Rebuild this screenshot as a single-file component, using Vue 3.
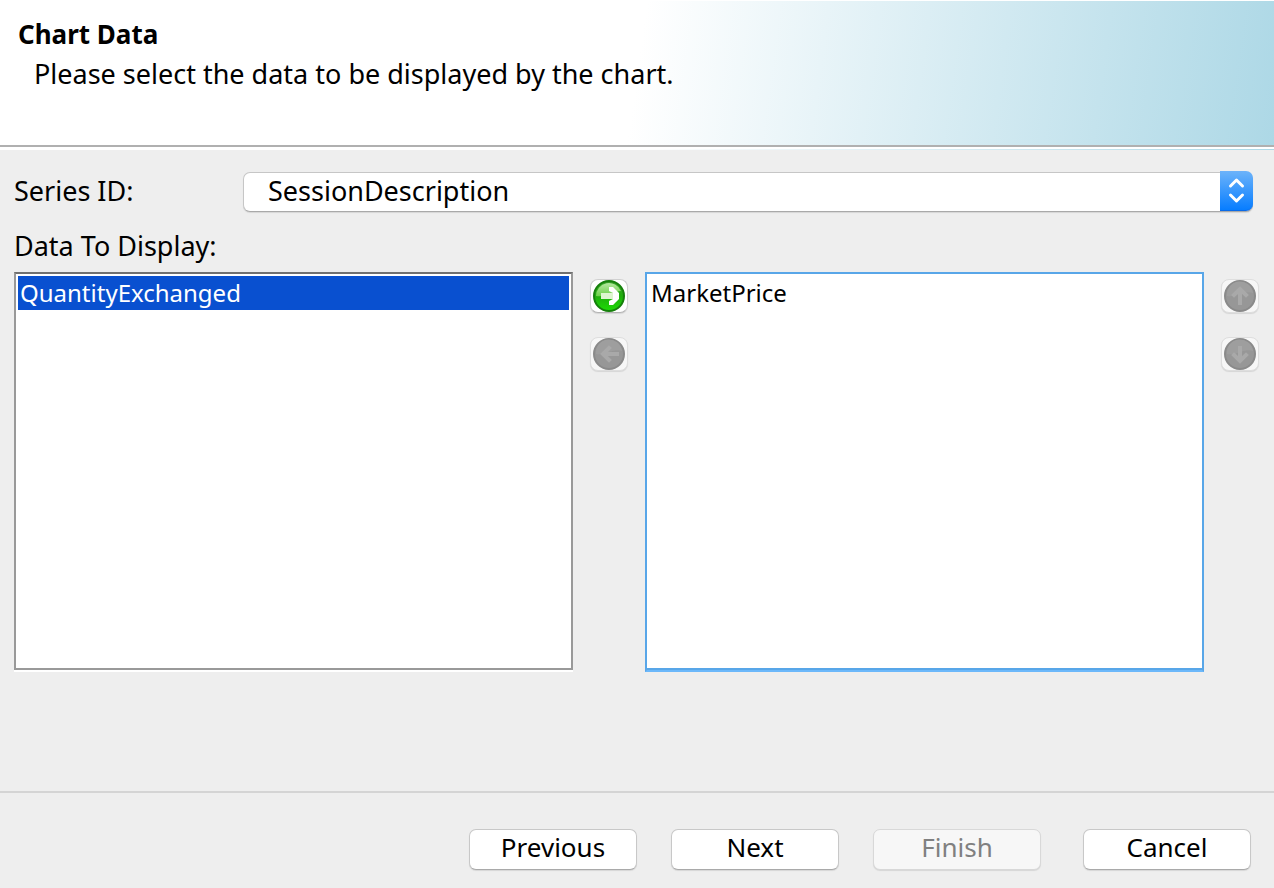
<script setup>
import { ref } from 'vue'

const series = ref('SessionDescription')
const available = ref(['QuantityExchanged'])
const displayed = ref(['MarketPrice'])
const pickedAvailable = ref(['QuantityExchanged'])
const pickedDisplayed = ref([])

function addPicked() {
  displayed.value.push(...pickedAvailable.value)
  available.value = available.value.filter((n) => !pickedAvailable.value.includes(n))
  pickedAvailable.value = []
}
</script>

<template>
  <div class="wizard">
    <header class="banner">
      <h1>Chart Data</h1>
      <p>Please select the data to be displayed by the chart.</p>
    </header>
    <div class="rule"></div>

    <main class="content">
      <div class="series-row">
        <label for="series">Series ID:</label>
        <div class="combo">
          <select id="series" v-model="series">
            <option>SessionDescription</option>
          </select>
          <span class="stepper" aria-hidden="true">
            <svg width="33" height="39" viewBox="0 0 33 39">
              <path d="M10.5 15 L16.5 9 L22.5 15 M10.5 24 L16.5 30 L22.5 24" fill="none" stroke="#fff" stroke-width="3" stroke-linecap="round" stroke-linejoin="round" />
            </svg>
          </span>
        </div>
      </div>

      <label class="lists-label" for="available">Data To Display:</label>
      <div class="lists">
        <select id="available" v-model="pickedAvailable" class="list available" multiple>
          <option v-for="name in available" :key="name">{{ name }}</option>
        </select>
        <div class="tools">
          <button class="tool" type="button" aria-label="Add" @click="addPicked">
            <svg width="34" height="32" viewBox="0 0 34 32">
              <defs>
                <linearGradient id="green" x1="0" y1="0" x2="0" y2="1">
                  <stop offset="0" stop-color="#3aa02a" />
                  <stop offset="0.5" stop-color="#1fae0c" />
                  <stop offset="1" stop-color="#1ddc06" />
                </linearGradient>
                <linearGradient id="gloss" x1="0" y1="0" x2="0" y2="1">
                  <stop offset="0" stop-color="#b4e8a0" />
                  <stop offset="1" stop-color="#6cd048" />
                </linearGradient>
              </defs>
              <circle cx="17" cy="16" r="15" fill="url(#green)" stroke="#16800c" stroke-width="2" />
              <path d="M4 16 A13 13 0 0 1 29 11 Q23 11 17 14 Q10 17 4 16 Z" fill="url(#gloss)" />
              <path d="M9 13 H22 V19 H9 Z" fill="#def5d0" />
              <path d="M17 7 H21 L24 10 L27 13 V19 L24 22 L21 25 H17 V21 L21 19 V13 L17 11 Z" fill="#fff" />
            </svg>
          </button>
          <button class="tool" type="button" aria-label="Remove" disabled>
            <svg width="34" height="32" viewBox="0 0 34 32">
              <circle cx="17" cy="16" r="15" fill="#979797" stroke="#8a8a8a" stroke-width="2" />
              <path d="M4 16 A13 13 0 0 1 30 13 Q24 11 17 14 Q10 17 4 16 Z" fill="#9e9e9e" />
              <path d="M25 16 H12 M17 10 L11 16 L17 22" fill="none" stroke="#a9a9a9" stroke-width="4" stroke-linecap="square" />
            </svg>
          </button>
        </div>
        <select v-model="pickedDisplayed" class="list displayed" multiple aria-label="Displayed data">
          <option v-for="name in displayed" :key="name">{{ name }}</option>
        </select>
        <div class="tools">
          <button class="tool" type="button" aria-label="Move up" disabled>
            <svg width="34" height="32" viewBox="0 0 34 32">
              <circle cx="17" cy="16" r="15" fill="#979797" stroke="#8a8a8a" stroke-width="2" />
              <path d="M4 16 A13 13 0 0 1 30 13 Q24 11 17 14 Q10 17 4 16 Z" fill="#9e9e9e" />
              <path d="M17 23 V10 M11 15 L17 9 L23 15" fill="none" stroke="#a9a9a9" stroke-width="4" stroke-linecap="square" />
            </svg>
          </button>
          <button class="tool" type="button" aria-label="Move down" disabled>
            <svg width="34" height="32" viewBox="0 0 34 32">
              <circle cx="17" cy="16" r="15" fill="#979797" stroke="#8a8a8a" stroke-width="2" />
              <path d="M4 16 A13 13 0 0 1 30 13 Q24 11 17 14 Q10 17 4 16 Z" fill="#9e9e9e" />
              <path d="M17 10 V22 M11 17 L17 23 L23 17" fill="none" stroke="#a9a9a9" stroke-width="4" stroke-linecap="square" />
            </svg>
          </button>
        </div>
      </div>
    </main>

    <footer class="actions">
      <button type="button">Previous</button>
      <button type="button">Next</button>
      <button type="button" disabled>Finish</button>
      <button class="cancel" type="button">Cancel</button>
    </footer>
  </div>
</template>

<style>
body {
  margin: 0;
  background: #eee;
}
</style>

<style scoped>
.wizard {
  display: flex;
  flex-direction: column;
  min-height: 100vh;
  box-sizing: border-box;
  background: #eee;
  color: #000;
  font-family: "Noto Sans", "Lucida Grande", sans-serif;
  font-size: 27px;
  line-height: 40px;
}
.banner {
  min-height: 145px;
  box-sizing: border-box;
  padding: 13px 18px;
  border-top: 1px solid #fff;
  background: linear-gradient(98deg, #fff 50%, #add8e6 100%);
}
h1,
p {
  margin: 0;
  font-size: 27px;
  line-height: 40px;
}
h1 {
  font-size: 26px;
  font-weight: 700;
}
p {
  padding-left: 16px;
}
.rule {
  height: 2px;
  border-top: 2px solid #b0b0b0;
  border-bottom: 1px solid transparent;
  background: linear-gradient(90deg, #fff 50%, #add8e6 100%) bottom / 100% 1px no-repeat border-box, #fff;
}
.content {
  display: flex;
  flex: 1;
  flex-direction: column;
  padding: 21px 14px 119px;
}
.series-row {
  display: flex;
  align-items: center;
}
.series-row label {
  width: 229px;
}
.combo {
  position: relative;
  flex: 1;
  height: 40px;
  margin-right: 7px;
}
.combo select {
  width: 100%;
  height: 40px;
  padding: 0 48px 2px 24px;
  border: 1px solid #c6c6c6;
  border-bottom-color: #a9a9a9;
  border-radius: 7px;
  appearance: none;
  background: #fff;
  box-shadow: 0 1px 1px rgba(0, 0, 0, 0.1);
  color: #000;
  font: inherit;
  line-height: 36px;
}
.stepper {
  position: absolute;
  top: 0;
  right: 0;
  width: 33px;
  height: 39px;
  border-bottom: 1px solid #0a6be8;
  border-radius: 0 7px 7px 0;
  background: linear-gradient(#6cb3fa, #077dff);
  pointer-events: none;
}
.stepper svg {
  display: block;
}
.lists-label {
  margin-top: 16px;
  line-height: 38px;
}
.lists {
  display: flex;
  flex: 1;
  margin-top: 7px;
}
.list {
  flex: 1 1 0;
  min-width: 0;
  height: auto;
  box-sizing: border-box;
  padding: 2px;
  overflow: hidden;
  border-radius: 0;
  outline: none;
  background: #fff;
  color: #000;
  font: inherit;
  font-size: 24px;
}
.list option {
  min-height: 34px;
  padding: 0 2px;
  line-height: 34px;
}
.list option:checked {
  background: #0950d0 linear-gradient(#0950d0, #0950d0);
  color: #fff;
  -webkit-text-fill-color: #fff;
}
.available {
  flex-basis: 2px;
  margin-bottom: 2px;
  border: 2px solid #999;
  border-top-color: #707070;
  box-shadow: 0 2px #fff;
}
.displayed {
  border: 2px solid #58a6e8;
  box-shadow: inset 0 -2px #58a6e8;
  border-bottom-color: #6cb8fa;
}
.tools {
  display: flex;
  flex-direction: column;
  gap: 24px;
  padding: 7px 17px 0;
}
.tools:last-child {
  padding-right: 1px;
}
.tool {
  width: 38px;
  height: 34px;
  padding: 0;
  border: 1px solid #d0d0d0;
  border-bottom-color: #b4b4b4;
  border-radius: 8px;
  background: #fff;
  box-shadow: 0 1px 1px rgba(0, 0, 0, 0.1);
}
.tool:disabled {
  border-color: #dedede;
  background: #f7f7f7;
}
.tool svg {
  display: block;
  margin: 0 auto;
}
.actions {
  display: flex;
  justify-content: flex-end;
  gap: 34px;
  padding: 36px 23px 18px;
  border-top: 2px solid #d4d4d4;
}
.actions button {
  width: 168px;
  height: 41px;
  padding: 0 0 4px;
  border: 1px solid #c8c8c8;
  border-bottom-color: #a9a9a9;
  border-radius: 7px;
  background: #fff;
  box-shadow: 0 1px 1px rgba(0, 0, 0, 0.1);
  color: #000;
  font: inherit;
  font-size: 26px;
  line-height: 35px;
}
.actions button:disabled {
  border-color: #d8d8d8;
  background: #f7f7f7;
  color: #808080;
}
.actions .cancel {
  margin-left: 8px;
}
</style>
